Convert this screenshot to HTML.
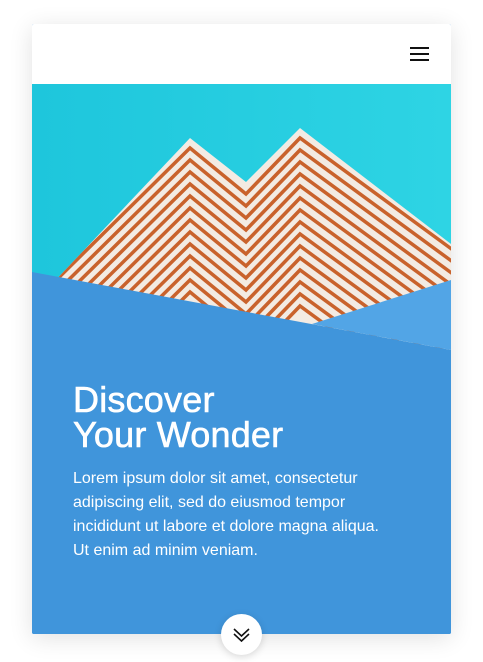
<!DOCTYPE html>
<html><head><style>
*{margin:0;padding:0;box-sizing:border-box}
body{width:483px;height:662px;background:#fff;font-family:"Liberation Sans",sans-serif;position:relative;overflow:hidden}
.card{position:absolute;left:32px;top:24px;width:419px;height:610px;background:#4095db;box-shadow:0 4px 24px rgba(0,0,0,.12);overflow:hidden;border-radius:2px}
.hdr{position:absolute;left:0;top:0;width:419px;height:60px;background:#fff}
.burger{position:absolute;right:22px;top:23px;width:19px}
.burger i{display:block;height:2px;background:#111;margin-bottom:4px}
h1{position:absolute;left:41px;top:358px;color:#fff;font-size:36px;font-weight:normal;line-height:35px;-webkit-text-stroke:0.6px #fff;letter-spacing:0.2px}
p{position:absolute;left:41px;top:443px;width:340px;color:#fff;font-size:16px;line-height:24px;white-space:nowrap}
.btn{position:absolute;left:221px;top:614px;width:41px;height:41px;border-radius:50%;background:#fff;box-shadow:0 2px 8px rgba(0,0,0,.15)}
</style></head><body>
<div class="card">
<svg width="419" height="610" style="position:absolute;left:0;top:0">
<defs><linearGradient id="sky" x1="0" x2="1"><stop offset="0" stop-color="#1ec6dc"/><stop offset="1" stop-color="#2ed4e4"/></linearGradient>
<clipPath id="b"><polygon points="20,260 158,114 214,158 268,104 419,220 419,330 0,330"/></clipPath></defs>
<rect x="0" y="60" width="419" height="290" fill="url(#sky)"/>
<g clip-path="url(#b)" fill="none">
<rect x="0" y="100" width="419" height="240" fill="#f3ebe3"/>
<g stroke="#c9622c" stroke-width="3.5">
<polyline points="0,280 158,124 214,170 268,114 440,240"/>
<polyline points="0,292 158,136 214,182 268,126 440,252"/>
<polyline points="0,304 158,148 214,194 268,138 440,264"/>
<polyline points="0,316 158,160 214,206 268,150 440,276"/>
<polyline points="0,328 158,172 214,218 268,162 440,288"/>
<polyline points="0,340 158,184 214,230 268,174 440,300"/>
<polyline points="0,352 158,196 214,242 268,186 440,312"/>
<polyline points="0,364 158,208 214,254 268,198 440,324"/>
<polyline points="0,376 158,220 214,266 268,210 440,336"/>
<polyline points="0,388 158,232 214,278 268,222 440,348"/>
<polyline points="0,400 158,244 214,290 268,234 440,360"/>
<polyline points="0,412 158,256 214,302 268,246 440,372"/>
<polyline points="0,424 158,268 214,314 268,258 440,384"/>
<polyline points="0,436 158,280 214,326 268,270 440,396"/>
<polyline points="0,448 158,292 214,338 268,282 440,408"/>
</g></g>
<polygon points="0,248 419,326 419,610 0,610" fill="#4095db"/>
<polygon points="280,300 419,256 419,326" fill="#52a5e6"/>
</svg>
<div class="hdr"><div class="burger"><i></i><i></i><i></i></div></div>
<h1>Discover<br>Your Wonder</h1>
<p>Lorem ipsum dolor sit amet, consectetur<br>adipiscing elit, sed do eiusmod tempor<br>incididunt ut labore et dolore magna aliqua.<br>Ut enim ad minim veniam.</p>
</div>
<div class="btn"><svg width="41" height="41"><polyline points="13,15 20.5,22 28,15" fill="none" stroke="#111" stroke-width="1.6"/><polyline points="13,20 20.5,27 28,20" fill="none" stroke="#111" stroke-width="1.6"/></svg></div>
</body></html>
